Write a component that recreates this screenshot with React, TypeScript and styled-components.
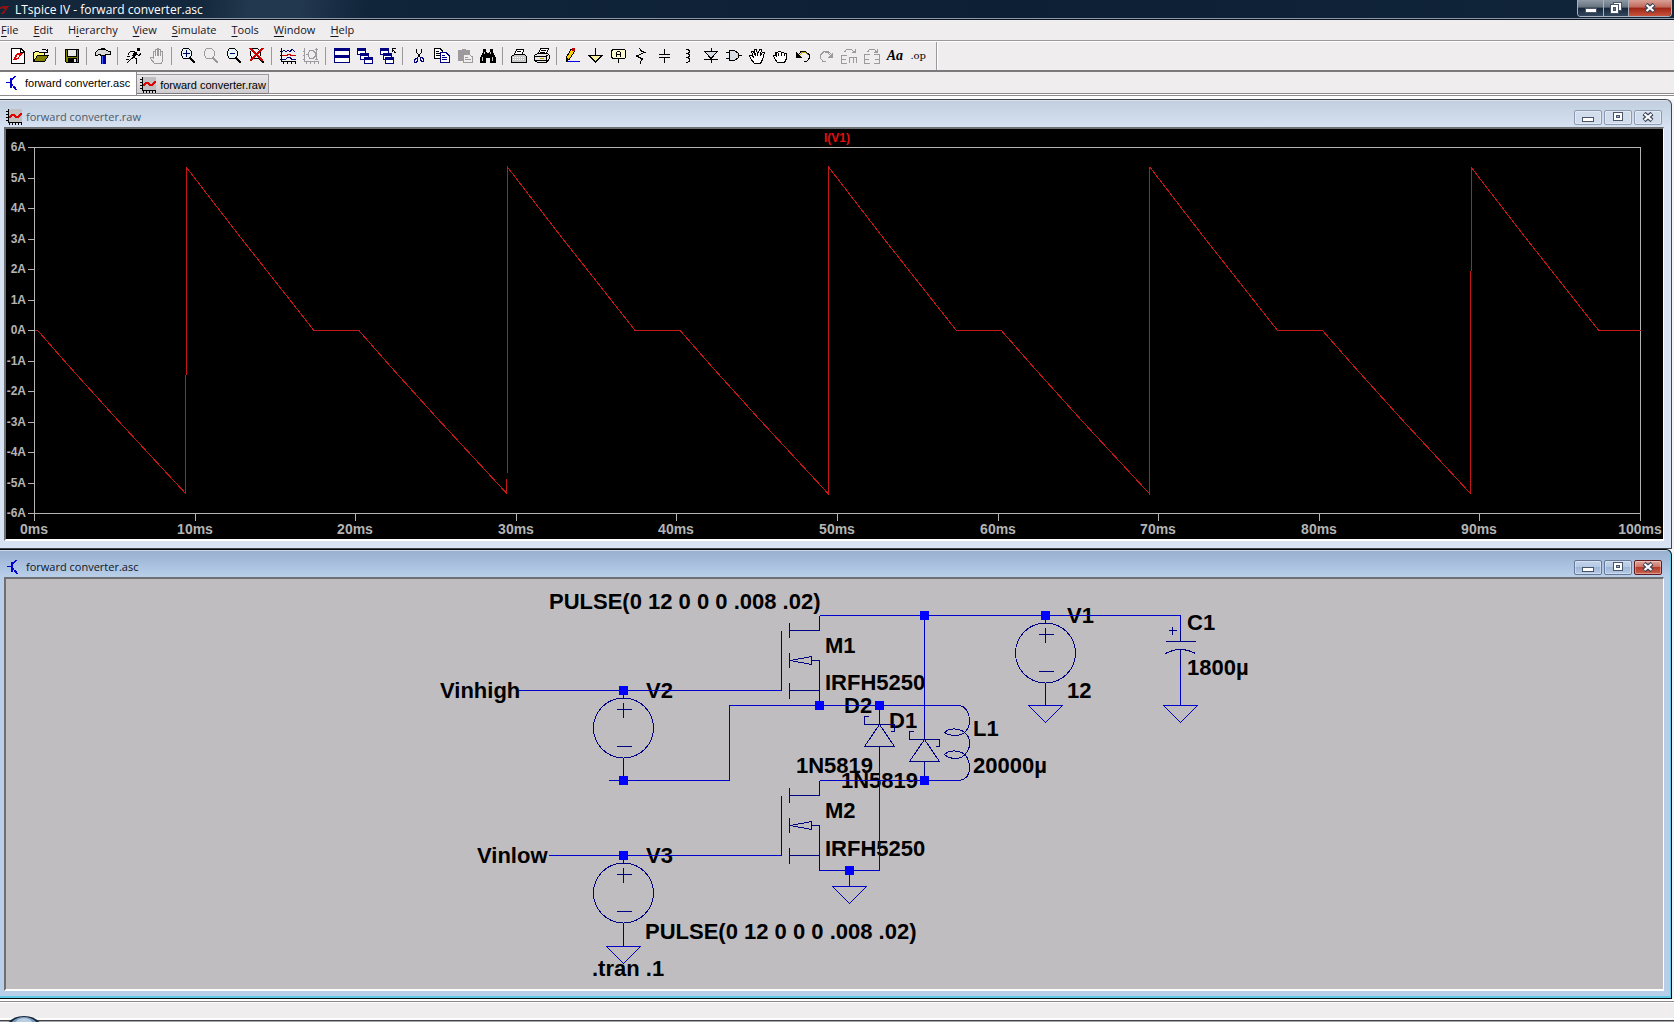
import React from "react";
import styled, { createGlobalStyle, css } from "styled-components";

const UI = `"Open Sans", "Noto Sans", sans-serif`;
const ARIAL = `"Liberation Sans", Arial, sans-serif`;

const GlobalStyle = createGlobalStyle`
  *, *::before, *::after { box-sizing: border-box; }
  body { margin: 0; background: #f0edef; font-family: ${UI}; font-size: 11px; }
  button { margin: 0; padding: 0; border: 0; background: none; font: inherit; color: inherit; }
`;

/* ---------- frame of the application ---------- */

const Shell = styled.div`
  display: flex;
  flex-direction: column;
  min-height: 100vh;
`;

const TitleBar = styled.header`
  display: flex;
  align-items: flex-start;
  justify-content: space-between;
  height: 20px;
  padding-right: 2px;
  color: #fff;
  background: linear-gradient(100deg, #132539 0%, #14283d 12%, #22384e 15%, #22384e 18%, #10243a 22%, #0c1f35 60%, #10243a 100%);
  border-bottom: 1px solid #0a1220;
  box-shadow: inset 0 -1px 0 #8d99a6;
`;

const AppName = styled.h1`
  display: flex;
  align-items: center;
  gap: 6px;
  margin: 0;
  height: 19px;
  font-size: 12px;
  line-height: 19px;
  font-weight: 400;
`;

const AppControls = styled.div`
  display: flex;
  height: 17px;
  border: 1px solid #a9b2bc;
  border-top: 0;
  border-radius: 0 0 4px 4px;
  overflow: hidden;
`;

const AppControl = styled.button<{ $close?: boolean }>`
  display: grid;
  place-items: center;
  width: ${(p) => (p.$close ? 43 : 25)}px;
  background: ${(p) =>
    p.$close
      ? "linear-gradient(#d9a196 0, #c0685a 45%, #9c2413 50%, #c8543c 100%)"
      : "linear-gradient(#8f9aa6 0, #66727f 45%, #15263a 50%, #33475c 100%)"};
  & + & { border-left: 1px solid #a9b2bc; }
`;

const MenuBar = styled.nav`
  display: flex;
  gap: 15px;
  height: 22px;
  padding: 0 1px;
  background: #f0edef;
  border-bottom: 1px solid #fff;
  box-shadow: inset 0 -1px 0 #9b999b;
`;

const MenuItem = styled.button`
  color: #14141e;
  line-height: 20px;
  height: 20px;
  u { text-underline-offset: 2px; }
`;

const ToolBar = styled.div`
  display: flex;
  align-items: stretch;
  height: 30px;
  padding-left: 6px;
  background: #f0edef;
  border-bottom: 2px solid #7b797b;
`;

const ToolGroup = styled.div`
  display: flex;
  align-items: center;
`;

const Separator = styled.span`
  align-self: center;
  width: 8px;
  height: 18px;
  background: linear-gradient(90deg, transparent 3px, #9b999b 3px, #9b999b 4px, transparent 4px);
`;

const ToolButton = styled.button`
  display: flex;
  align-items: center;
  justify-content: flex-end;
  padding-right: 3px;
  width: 23px;
  height: 28px;
`;

const ToolBarEnd = styled.span`
  margin-left: 7px;
  border-left: 1px solid #9b999b;
  box-shadow: inset 1px 0 0 #fff;
  width: 2px;
`;

const ToolWord = styled.span<{ $op?: boolean }>`
  line-height: 16px;
  color: #000;
  ${(p) =>
    p.$op
      ? css`
          font-family: "DejaVu Serif", serif;
          font-size: 10px;
        `
      : css`
          font-family: "Liberation Serif", "Times New Roman", serif;
          font-size: 14px;
          font-weight: 700;
          font-style: italic;
        `}
`;

const TabStrip = styled.div`
  display: flex;
  align-items: flex-start;
  height: 27px;
  padding-right: 4px;
  background: linear-gradient(#f0edef 21px, #8d8b8d 21px, #8d8b8d 22px, #fff 22px, #fff 23px, #8d8b8d 23px, #8d8b8d 24px, #fff 24px);
`;

const Tab = styled.button<{ $active?: boolean }>`
  display: flex;
  align-items: center;
  gap: 4px;
  font-family: ${ARIAL};
  font-size: 11px;
  color: #000;
  ${(p) =>
    p.$active
      ? css`
          height: 23px;
          padding: 0 6px 1px 5px;
          background: #fff;
          border-right: 1px solid #8d8b8d;
        `
      : css`
          height: 20px;
          margin-top: 2px;
          padding: 1px 2px 0 3px;
          background: linear-gradient(#e8e6e8, #cfcdcf);
          border: 1px solid #9b999b;
          border-left: 0;
          border-bottom-color: #7b797b;
        `}
`;

/* ---------- child windows ---------- */

const Desktop = styled.main`
  display: flex;
  flex-direction: column;
  padding-right: 2px;
  background: #f5f3f5;
`;

const Pane = styled.section<{ $active?: boolean }>`
  display: flex;
  flex-direction: column;
  border: 1px solid ${(p) => (p.$active ? "#05080c" : "#3f4650")};
  border-left: 0;
  border-radius: 0 6px 0 0;
  padding: 0 7px 7px 4px;
  background: ${(p) =>
    p.$active
      ? "linear-gradient(#fff 0, #98b1cf 1px, #adc4e2 18px, #b9cfe9 27px, #b9cfe9 100%)"
      : "linear-gradient(#eef3fa 0, #c3cfdf 1px, #cbd8e8 14px, #d7e2f2 27px, #d7e2f2 100%)"};
  ${(p) => p.$active && css`box-shadow: inset 0 -2px 0 #5fcbe6, inset -1px 0 0 #5fcbe6;`}
`;

const PaneHeader = styled.header`
  display: flex;
  align-items: center;
  height: 27px;
  padding: 7px 2px 0 2px;
`;

const PaneTitle = styled.h2<{ $active?: boolean }>`
  flex: 1;
  margin: 0 0 0 4px;
  font-size: 11px;
  line-height: 16px;
  font-weight: 400;
  color: ${(p) => (p.$active ? "#10151c" : "#4e5866")};
`;

const PaneControls = styled.div`
  display: flex;
  gap: 2px;
`;

const PaneControl = styled.button<{ $close?: boolean; $active?: boolean }>`
  display: grid;
  place-items: center;
  width: 28px;
  height: 15px;
  border-radius: 2px;
  border: 1px solid ${(p) => (p.$close ? "#5e1a1c" : p.$active ? "#66799a" : "#8d9bb4")};
  background: ${(p) =>
    p.$close
      ? "linear-gradient(#e0a69c 0, #cf7468 45%, #b53a28 50%, #cb6450 100%)"
      : p.$active
      ? "linear-gradient(#c3d4ea 0, #b4c9e4 45%, #9fb8d8 50%, #b5cae6 100%)"
      : "linear-gradient(#d3deec, #d0dcec)"};
  box-shadow: inset 0 0 0 1px rgba(255, 255, 255, 0.35);
`;

const Client = styled.div<{ $fill: string }>`
  border: solid;
  border-width: 2px 1px 2px 2px;
  border-color: #6e6f73 #fff #fff #6e6f73;
  background: ${(p) => p.$fill};
`;

const Canvas = styled.svg`
  display: block;
  width: 100%;
  height: auto;
  shape-rendering: crispEdges;
  font-family: ${ARIAL};
  font-weight: 700;
`;

const StatusBar = styled.footer`
  height: 20px;
  background: #f0edef;
  border-bottom: 1px solid #fff;
  box-shadow: inset 0 2px 0 #fff, inset 0 3px 0 #8d878b, inset 0 4px 0 #fff;
`;

const TaskBar = styled.div`
  position: relative;
  height: 3px;
  background: linear-gradient(#f8f8f8 1px, #45454b 1px, #45454b 2px, #a2a3a6 2px);
`;

const Orb = styled.svg`
  position: absolute;
  left: 6px;
  bottom: 0;
  display: block;
`;

/* ---------- icons ---------- */

const Glyph = styled.svg`
  display: block;
  flex: none;
  shape-rendering: crispEdges;
  fill: none;
  stroke-width: 1px;
`;

const SmoothGlyph = styled(Glyph)`
  shape-rendering: auto;
`;

const Icon = ({ children }: { children: React.ReactNode }) => (
  <Glyph width="16" height="16" viewBox="0 0 16 16" aria-hidden="true">
    {children}
  </Glyph>
);

const K = "#000";
const N = "#000080";
const G = "#9c9a9c";

const PlotIcon = () => (
  <Icon>
    <rect x="2" y="0" width="14" height="13" fill="#c0c0c0" />
    <path d="M2.5 0V13.5H16M0 2.5H2M0 5.5H2M0 8.5H2M0 11.5H2M3.5 14V16M6.5 14V16M9.5 14V16M12.5 14V16M15.5 14V16" stroke={K} />
    <path d="M3 8H4L6 6H8L10 8H12L15.500 4" stroke="#e00000" strokeWidth="2" />
  </Icon>
);

const TransistorIcon = () => (
  <Icon>
    <path d="M1 7.5H6M10.5 1L6.5 5M6.5 9L11 14.5" stroke="#0000d0" />
    <path d="M6 2.5V12.5" stroke="#0000d0" strokeWidth="2" />
    <path d="M8 13L10 10.5L12 15.5Z" fill="#0000d0" />
  </Icon>
);

const lens = (color: string, fill: string) => (
  <>
    <path d="M3.500 0.500H8.500L11.500 3.500V7.500L8.500 10.500H3.500L1.500 7.500V3.500Z" stroke={color} fill={fill} />
    <path d="M10 10L15 15" stroke={color} strokeWidth="2.4" />
  </>
);

const icons: Record<string, React.ReactNode> = {
  "New Schematic": (
    <Icon>
      <path d="M1.500 0.500H11L14.500 4V15.500H1.500Z" fill="#fff" stroke={K} />
      <path d="M10.500 0.500V4.500H14.500" stroke={K} />
      <path d="M3 12L6 6H8L6 10H8L7 12ZM7 5H13L12 7H11L8 12L9 7H7Z" fill="#e00000" />
    </Icon>
  ),
  Open: (
    <Icon>
      <path d="M0.500 13.500V4.500H1.500L2.500 3.500H5.500L6.500 4.500H11.500V7.500" fill="#ffff80" stroke={K} />
      <path d="M0.500 13.500L4.500 7.500H15.500L11.500 13.500Z" fill="#808000" stroke={K} />
      <path d="M9 1.500H12.500L14.500 3.500M14.500 1V4.500H11" stroke={K} />
    </Icon>
  ),
  Save: (
    <Icon>
      <path d="M1.500 1.500H14.500V14.500H2.500L1.500 13.500Z" fill="#808000" stroke={K} />
      <rect x="4" y="2" width="8" height="6" fill="#e8e8e8" />
      <path d="M3.500 2V8.500H12.500V2" stroke={K} />
      <rect x="4" y="10" width="9" height="5" fill={K} />
      <rect x="10" y="11" width="2" height="3" fill="#e8e8e8" />
    </Icon>
  ),
  "Control Panel": (
    <Icon>
      <path d="M0.500 7.500V4.500L3.500 1.500H10.500L13.500 3.500H15.500V6.500H10.500V7.500H5.500V6.500H3.500L2.500 7.500Z" fill="#d8d8d8" stroke={K} />
      <rect x="6" y="0" width="4" height="2" fill={K} />
      <rect x="6" y="8" width="5" height="8" fill="#0000a0" />
      <rect x="7" y="8" width="1" height="8" fill="#4060ff" />
    </Icon>
  ),
  Run: (
    <Icon>
      <rect x="11" y="0" width="3" height="3" fill={K} />
      <path d="M4 3.500H8L11 5L8 9L5 11L1 15M8 9L10.500 11V15.500M10 6L13 7.500L15 5.500M4.500 3L2 6.500M1 8.500H4M0 11.500H3" stroke={K} />
      <path d="M8 4L11 5L8 9L6 8Z" fill={K} />
    </Icon>
  ),
  Halt: (
    <Icon>
      <path d="M5.500 15.500L1.500 10.500V9.500H3.500L4.500 10.500V3.500H6.500V8V1.500H8.500V8V0.500H9.500V8V1.500H11.500V8V3.500H13.500V12.500L12.500 15.500Z" stroke={G} />
    </Icon>
  ),
  "Zoom In": (
    <Icon>
      {lens(K, "#e4f6f8")}
      <path d="M3 5.500H10M6.500 2V9" stroke="#000060" strokeWidth="1.500" />
    </Icon>
  ),
  "Zoom Area": <Icon>{lens(G, "none")}</Icon>,
  "Zoom Back": (
    <Icon>
      {lens(K, "#e4f6f8")}
      <path d="M4 5.500H9" stroke="#000060" strokeWidth="1.500" />
    </Icon>
  ),
  "Zoom Full Extents": (
    <Icon>
      {lens(K, "#e4f6f8")}
      <path d="M1 0L14 13M14 0L1 13" stroke="#d00000" strokeWidth="1.800" />
    </Icon>
  ),
  "Pick Visible Traces": (
    <Icon>
      <path d="M1.500 0V13.500H16M0 3.500H1M0 7.500H1M0 11.500H1M3.500 14V16M7.500 14V16M11.500 14V16M15.500 14V16" stroke={K} />
      <path d="M2 4L4 2L6 4L8 2L10 4L12 1L15 4" stroke={N} />
      <path d="M2 7.500H6L9 6.500L12 7.500H16" stroke="#d00000" />
      <path d="M2 11.500H5L8 9.500H10L12 11.500H16" stroke={N} />
    </Icon>
  ),
  "Autorange Y-axis": (
    <Icon>
      <path d="M1.500 0V13.500H16M0 3.500H1M0 7.500H1M0 11.500H1M3.500 14V16M7.500 14V16M11.500 14V16M15.500 14V16M7 2.500H10L12.500 5V8L10 10.500H7M7 2.500L5 5V8L7 10.500M3 6.500H6M13.500 0V12M12 1.500H15M12 11.500H15" stroke={G} />
    </Icon>
  ),
  "Tile Windows": (
    <Icon>
      <rect x="0.500" y="0.500" width="15" height="7" fill="#fff" stroke={N} />
      <rect x="0.500" y="7.500" width="15" height="7" fill="#fff" stroke={N} />
      <path d="M0 2H16M0 9H16" stroke={N} strokeWidth="2" />
    </Icon>
  ),
  Cascade: (
    <Icon>
      {[[0, 0], [3, 5], [7, 9]].map(([x, y]) => (
        <g key={x}>
          <rect x={x + 0.5} y={y + 0.5} width="8" height="6" fill="#fff" stroke={N} />
          <rect x={x} y={y} width="9" height="3" fill={N} />
        </g>
      ))}
    </Icon>
  ),
  "Close All": (
    <Icon>
      {[[0, 0], [3, 5], [5, 9]].map(([x, y]) => (
        <g key={x}>
          <rect x={x + 0.5} y={y + 0.5} width="8" height="6" fill="#fff" stroke={N} />
          <rect x={x} y={y} width="9" height="3" fill={N} />
        </g>
      ))}
      <path d="M15.500 5L12.500 1.500M12 4V0.500H16" stroke={K} />
    </Icon>
  ),
  Cut: (
    <Icon>
      <path d="M5.500 1V4L9.500 10M10.500 1V4L6.500 10" stroke={K} />
      <path d="M4.500 10.500H6.500V12.500L5.500 14.500H3.500V12.500ZM9.500 9.500H11.500L12.500 11.500V13.500H10.500L9.500 11.500Z" stroke={N} />
    </Icon>
  ),
  Copy: (
    <Icon>
      <path d="M0.500 0.500H6L8.500 3V10.500H0.500Z" fill="#fff" stroke={K} />
      <path d="M2 3.500H5M2 5.500H6M2 7.500H6" stroke={K} />
      <path d="M6.500 4.500H12L15.500 8V14.500H6.500Z" fill="#fff" stroke={N} />
      <path d="M8 7.500H11M8 9.500H13M8 11.500H13" stroke={N} />
    </Icon>
  ),
  Paste: (
    <Icon>
      <path d="M1 2H5V1H9V2H13V13H1Z" fill={G} />
      <path d="M6.500 6.500H12L15.500 9V14.500H6.500Z" fill="#f0edef" stroke={G} />
      <path d="M8 9.500H11M8 11.500H14" stroke={G} />
    </Icon>
  ),
  Find: (
    <Icon>
      <path d="M3 1H6V4H7V5H9V4H10V1H13V4L16 10V15H10V10H6V15H0V10L3 4Z" fill={K} />
      <path d="M4.500 4V6M2.500 9V13M10.500 4V6M12.500 9V13" stroke="#c8c8c8" />
    </Icon>
  ),
  "Print Setup": (
    <Icon>
      <path d="M3.500 6.500L5.500 1.500H12.500L11.500 6.500" fill="#fff" stroke={K} />
      <path d="M0.500 14.500V8.500L3.500 6.500H13.500L15.500 8.500V14.500Z" fill="#c8c8c8" stroke={K} />
      <path d="M2 9.500H14M2 11.500H14" stroke="#fff" strokeDasharray="1 1" />
      <path d="M6 3.500H10" stroke={K} />
    </Icon>
  ),
  Print: (
    <Icon>
      <path d="M4.500 5.500L6.500 0.500H14.500L12.500 5.500" fill="#fff" stroke={K} />
      <path d="M7 2.500H12M6 4.500H11" stroke={K} />
      <path d="M0.500 12.500V7.500L3.500 5.500H13.500L15.500 7.500V10.500L12.500 14.500H3.500Z" fill="#e8e8e8" stroke={K} />
      <path d="M1 8.500H12L15 6M1 12.500H12M12.500 9V14" stroke={K} />
      <rect x="6" y="10" width="4" height="1" fill="#c0b000" />
    </Icon>
  ),
  "Draw Wire": (
    <Icon>
      <path d="M1.500 12.500V9L6 1.500H9.500V3.500L4.500 11Z" fill="#ffd000" stroke={K} />
      <rect x="7" y="0" width="3" height="3" fill="#c00000" />
      <rect x="1" y="10" width="2" height="4" fill={K} />
      <path d="M2 13.500H15" stroke="#0000e0" />
    </Icon>
  ),
  Ground: (
    <Icon>
      <path d="M1 7.500H15L8.500 13.500Z" fill="#f4f0a0" />
      <path d="M0 7.500H15M7.500 0V7M1.500 8L7.500 14L13.500 8" stroke={K} />
    </Icon>
  ),
  "Label Net": (
    <Icon>
      <path d="M2.500 1.500H13.500L14.500 2.500V9.500L13.500 10.500H2.500L0.500 9.500V2.500Z" fill="#fbf8cc" stroke={K} />
      <path d="M5.500 9V4.500L6.500 3.500H8.500L9.500 4.500V9M5 6.500H10M7.500 11V15" stroke={K} />
    </Icon>
  ),
  Resistor: (
    <Icon>
      <path d="M5.500 0L6.500 2.500L10.500 4.500L2.500 8L8.500 11L6.500 13.500V16" stroke={K} />
    </Icon>
  ),
  Capacitor: (
    <Icon>
      <path d="M7.500 1V6M7.500 10V15" stroke={K} />
      <path d="M2 6.500H13M2 9.500H13" stroke={K} />
    </Icon>
  ),
  Inductor: (
    <Icon>
      <path d="M5.500 1.500H7.500L9.500 2.500V4.500L7.500 5.500H6M7.500 5.500L9.500 6.500V8.500L7.500 9.500H6M7.500 9.500L9.500 10.500V13L7.500 14.500H5.500" stroke={K} />
    </Icon>
  ),
  Diode: (
    <Icon>
      <path d="M1.500 3.500H14.500L8 10.500Z" fill="#d8dce4" stroke={K} />
      <path d="M8.500 0V3M8.500 11V15M1 11.500H15" stroke={K} />
    </Icon>
  ),
  Component: (
    <Icon>
      <path d="M3.500 2.500H8.500L12.500 5.500V9.500L8.500 12.500H3.500Z" fill="#d8dce4" stroke={K} />
      <path d="M0 4.500H3M0 10.500H3M13 7.500H16" stroke={K} />
    </Icon>
  ),
  Move: (
    <Icon>
      <path d="M5.500 15.500L1.500 10.500L0.500 7.500H2.500L4.500 9.500L2.500 3.500H4.500L6.500 7.500L5.500 1.500H7.500L8.500 6.500L10.500 1.500H12.500L11.500 7.500L13.500 4.500H15.500L13.500 11.500L11.500 15.500Z" fill="#fff" stroke={K} />
    </Icon>
  ),
  Drag: (
    <Icon>
      <path d="M5.500 14.500L2.500 10.500L1.500 7.500H3.500V4.500H5.500L6.500 3.500H8.500L9.500 4.500H11.500L12.500 5.500H14.500V10.500L12.500 14.500Z" fill="#fff" stroke={K} />
      <path d="M4.500 5V9M6.500 5V8M9.500 5V8M12.500 6V8" stroke={K} />
    </Icon>
  ),
  Undo: (
    <Icon>
      <path d="M4 6L6 3.500H10.500L14.500 7V10L11.500 13.500H9" stroke={K} />
      <path d="M5 7L7 4.500H10.500L13.500 7.500" stroke="#c0a800" />
      <path d="M1 4V10H7Z" fill={K} />
    </Icon>
  ),
  Redo: (
    <Icon>
      <path d="M13 6L10 3.500H6L2.500 7V10L5 13.500H8" stroke={G} />
      <path d="M12 7L10 4.500H7" stroke={G} />
      <path d="M15 4V10H9Z" fill={G} />
    </Icon>
  ),
  Rotate: (
    <Icon>
      <path d="M5.500 7.500H0.500V15.500H5.500M1 11.500H5M8.500 15V9.500H15.500V15M12.500 10V15" stroke={G} strokeWidth="1.500" />
      <path d="M3.500 4L5.500 1.500H10.500L13.500 4M14.500 0.500V4.500H10.500" stroke={G} />
    </Icon>
  ),
  Mirror: (
    <Icon>
      <path d="M5.500 6.500H0.500V15.500H5.500M1 11.500H5M10 6.500H15.500V15.500H10M11 11.500H15" stroke={G} strokeWidth="1.500" />
      <path d="M3.500 4L5.500 1.500H10.500L12.500 4M13.500 0.500V4.500H9.500" stroke={G} />
    </Icon>
  ),
  Text: <ToolWord>Aa</ToolWord>,
  "SPICE Directive": <ToolWord $op>.op</ToolWord>,
};

const toolGroups = [
  ["New Schematic", "Open"],
  ["Save"],
  ["Control Panel"],
  ["Run", "Halt"],
  ["Zoom In", "Zoom Area", "Zoom Back", "Zoom Full Extents"],
  ["Pick Visible Traces", "Autorange Y-axis"],
  ["Tile Windows", "Cascade", "Close All"],
  ["Cut", "Copy", "Paste", "Find"],
  ["Print Setup", "Print"],
  ["Draw Wire", "Ground", "Label Net", "Resistor", "Capacitor", "Inductor", "Diode", "Component", "Move", "Drag", "Undo", "Redo", "Rotate", "Mirror", "Text", "SPICE Directive"],
];

const menus: [string, string, string][] = [
  ["", "F", "ile"],
  ["", "E", "dit"],
  ["H", "i", "erarchy"],
  ["", "V", "iew"],
  ["", "S", "imulate"],
  ["", "T", "ools"],
  ["", "W", "indow"],
  ["", "H", "elp"],
];

const MinMark = () => (
  <Glyph width="12" height="10" viewBox="0 0 12 10">
    <rect x="0.500" y="5.500" width="11" height="4" fill="#fff" stroke="#4a5468" />
  </Glyph>
);
const MaxMark = () => (
  <Glyph width="12" height="10" viewBox="0 0 12 10">
    <rect x="1.500" y="0.500" width="9" height="8" fill="#fff" stroke="#4a5468" />
    <rect x="4.500" y="3.500" width="3" height="2" fill="#9fb3d0" stroke="#4a5468" />
  </Glyph>
);
const RestoreMark = () => (
  <Glyph width="12" height="12" viewBox="0 0 12 12">
    <rect x="3.500" y="0.500" width="8" height="8" fill="#fff" stroke="#4a5468" />
    <rect x="0.500" y="2.500" width="8" height="9" fill="#fff" stroke="#4a5468" />
    <rect x="3.500" y="5.500" width="2" height="3" fill="#66727f" stroke="#4a5468" />
  </Glyph>
);
const CloseMark = () => (
  <SmoothGlyph width="12" height="10" viewBox="0 0 12 10">
    <path d="M2 1.500L10 8.500M10 1.500L2 8.500" stroke="#3e4458" strokeWidth="4.500" />
    <path d="M2.500 2L9.500 8M9.500 2L2.500 8" stroke="#fff" strokeWidth="2.200" />
  </SmoothGlyph>
);

/* ---------- waveform ---------- */

const X0 = 34;
const X1 = 1640;
const Y0 = 147;
const Y1 = 513;
const perMs = (X1 - X0) / 100;
const perAmp = (Y1 - Y0) / 12;
const px = (ms: number) => X0 + ms * perMs;
const py = (amp: number) => Y0 + (6 - amp) * perAmp;

const trace: [number, number][] = [[0, 0]];
for (let s = 0.2; s < 100; s += 20) {
  trace.push([s, 0], [s + 2, -1.2], [s + 5, -2.95], [s + 9.22, -5.35], [s + 9.26, 5.35]);
  trace.push([s + 12.6, 3.07], [s + 15, 1.47], [s + 17.2, 0], [Math.min(s + 20, 100), 0]);
}

const Waveform = () => (
  <Canvas viewBox="6 129 1657 410" role="img" aria-label="I(V1) over time">
    <g transform="translate(0.5 0.5)" fill="none" stroke="#b4b4b4">
      <rect x={X0} y={Y0} width={X1 - X0} height={Y1 - Y0} />
      {Array.from({ length: 13 }, (_, i) => (
        <path key={i} d={`M${X0 - 7} ${Math.round(py(6 - i))}H${X0}`} />
      ))}
      {Array.from({ length: 11 }, (_, i) => (
        <path key={i} d={`M${Math.round(px(i * 10))} ${Y1}V${Y1 + 7}`} />
      ))}
      <polyline points={trace.map(([t, a]) => `${px(t)},${py(a)}`).join(" ")} stroke="#c41818" />
    </g>
    <g fill="#b4b4b4">
      {Array.from({ length: 13 }, (_, i) => (
        <text key={i} x="26" y={Math.round(py(6 - i)) + 4} fontSize="12" textAnchor="end">
          {6 - i}A
        </text>
      ))}
      {Array.from({ length: 11 }, (_, i) => (
        <text key={i} x={Math.round(px(i * 10))} y="534" fontSize="14" textAnchor="middle">
          {i * 10}ms
        </text>
      ))}
    </g>
    <text x="837" y="142" fontSize="12" textAnchor="middle" fill="#e01010">
      I(V1)
    </text>
  </Canvas>
);

/* ---------- schematic ---------- */

const WIRE = "#0000cc";
const PART = "#000082";

const Source = ({ x, y, ground }: { x: number; y: number; ground?: boolean }) => (
  <g stroke={PART}>
    <path d={`M${x} ${y}v8M${x} ${y + 67}v${ground ? 24 : 23}M${x - 7} ${y + 19}h15M${x} ${y + 12}v15M${x - 7} ${y + 56}h15`} />
    <circle cx={x} cy={y + 37.5} r="30" />
  </g>
);

const Mosfet = ({ x, y }: { x: number; y: number }) => (
  <path
    stroke={PART}
    d={`M${x} ${y}v-60M${x + 8} ${y - 68}v15M${x + 8} ${y - 38}v15M${x + 8} ${y - 8}v16M${x + 8} ${y - 60}h30v-15M${x + 8} ${y}h30M${x + 38} ${y + 15}v-45h-8M${x + 9} ${y - 30}l21 -4v8z`}
  />
);

const Diode = ({ x, y }: { x: number; y: number }) => (
  <path stroke={PART} d={`M${x} ${y - 19}v19M${x - 11} ${y - 8}h-4v8h30v7h-4M${x} ${y}l-15 22h30zM${x} ${y + 22}v19`} />
);

const Ground = ({ x, y }: { x: number; y: number }) => <path stroke={WIRE} d={`M${x - 17} ${y}h34l-17 17z`} />;

const nodes = [[623, 690], [623, 780], [819, 705], [879, 705], [924, 615], [1045, 615], [924, 780], [623, 855], [849, 870]];

const labels: [number, number, string][] = [
  [549, 609, "PULSE(0 12 0 0 0 .008 .02)"],
  [440, 698, "Vinhigh"],
  [646, 698, "V2"],
  [477, 863, "Vinlow"],
  [646, 863, "V3"],
  [645, 939, "PULSE(0 12 0 0 0 .008 .02)"],
  [592, 976, ".tran .1"],
  [825, 653, "M1"],
  [825, 690, "IRFH5250"],
  [844, 713, "D2"],
  [889, 728, "D1"],
  [796, 773, "1N5819"],
  [841, 788, "1N5819"],
  [825, 818, "M2"],
  [825, 856, "IRFH5250"],
  [973, 736, "L1"],
  [973, 773, "20000µ"],
  [1067, 623, "V1"],
  [1067, 698, "12"],
  [1187, 630, "C1"],
  [1187, 675, "1800µ"],
];

const Schematic = () => (
  <Canvas viewBox="6 579 1657 410" role="img" aria-label="Forward converter schematic">
    <g fill="#000" fontSize="22">
      {labels.map(([x, y, t]) => (
        <text key={`${x}-${y}`} x={x} y={y}>
          {t}
        </text>
      ))}
    </g>
    <g transform="translate(0.5 0.5)" fill="none">
      <path
        stroke={WIRE}
        d="M518 690H781M608 780H729V705H959M819 615H1180V630M924 615V720M819 780H959M879 765V870H819M548 855H781M849 870V886M1180 665V705M1045 690V705"
      />
      <Source x={623} y={690} />
      <Source x={623} y={855} ground />
      <Source x={1045} y={615} />
      <Mosfet x={781} y={690} />
      <Mosfet x={781} y={855} />
      <Diode x={879} y={724} />
      <Diode x={924} y={739} />
      <path stroke={PART} d="M1180 630V641M1165 641H1195M1165 653Q1180 645 1195 653M1180 649V665M1168 630H1176M1172 626V634" />
      <path
        stroke={PART}
        d="M959 705C966 706 969 714 969 720C969 726 967 731 961 734C955 736 948 735 944 732C948 728 957 727 963 731C968 735 969 738 969 743C969 749 967 753 961 757C955 759 948 758 944 754C948 750 957 749 963 753C968 757 969 762 969 767C969 774 966 779 959 780"
      />
      <Ground x={623} y={946} />
      <Ground x={849} y={886} />
      <Ground x={1045} y={705} />
      <Ground x={1180} y={705} />
    </g>
    <g fill="#0000ff">
      {nodes.map(([x, y]) => (
        <rect key={`${x}-${y}`} x={x - 4} y={y - 4} width="9" height="9" />
      ))}
    </g>
  </Canvas>
);

/* ---------- page ---------- */

const ChildWindow = (props: { title: string; icon: React.ReactNode; fill: string; active?: boolean; children: React.ReactNode }) => (
  <Pane $active={props.active}>
    <PaneHeader>
      {props.icon}
      <PaneTitle $active={props.active}>{props.title}</PaneTitle>
      <PaneControls>
        <PaneControl $active={props.active} aria-label="Minimize"><MinMark /></PaneControl>
        <PaneControl $active={props.active} aria-label="Maximize"><MaxMark /></PaneControl>
        <PaneControl $active={props.active} $close={props.active} aria-label="Close"><CloseMark /></PaneControl>
      </PaneControls>
    </PaneHeader>
    <Client $fill={props.fill}>{props.children}</Client>
  </Pane>
);

export default function App() {
  return (
    <Shell>
      <GlobalStyle />
      <TitleBar>
        <AppName>
          <Glyph width="9" height="16" viewBox="0 0 9 16" aria-hidden="true">
            <path d="M2 4H9L7 7L4 12H1L5 7H3ZM0 5H2V7H0Z" fill="#8a1414" />
          </Glyph>
          LTspice IV - forward converter.asc
        </AppName>
        <AppControls>
          <AppControl aria-label="Minimize application"><MinMark /></AppControl>
          <AppControl aria-label="Restore application"><RestoreMark /></AppControl>
          <AppControl $close aria-label="Close application"><CloseMark /></AppControl>
        </AppControls>
      </TitleBar>
      <MenuBar>
        {menus.map(([a, b, c]) => (
          <MenuItem key={b + c}>
            {a}<u>{b}</u>{c}
          </MenuItem>
        ))}
      </MenuBar>
      <ToolBar>
        {toolGroups.map((group, i) => (
          <ToolGroup key={group[0]}>
            {i > 0 && <Separator />}
            {group.map((name) => (
              <ToolButton key={name} aria-label={name}>{icons[name]}</ToolButton>
            ))}
          </ToolGroup>
        ))}
        <ToolBarEnd />
      </ToolBar>
      <TabStrip>
        <Tab $active><TransistorIcon />forward converter.asc</Tab>
        <Tab><PlotIcon />forward converter.raw</Tab>
      </TabStrip>
      <Desktop>
        <ChildWindow title="forward converter.raw" icon={<PlotIcon />} fill="#000">
          <Waveform />
        </ChildWindow>
        <ChildWindow title="forward converter.asc" icon={<TransistorIcon />} fill="#c0bdc0" active>
          <Schematic />
        </ChildWindow>
      </Desktop>
      <StatusBar />
      <TaskBar>
        <Orb width="36" height="6" viewBox="0 0 36 6" aria-hidden="true">
          <ellipse cx="18" cy="11" rx="17" ry="11" fill="#16283c" />
          <ellipse cx="18" cy="11" rx="14" ry="10" fill="#7f9fbe" />
          <ellipse cx="18" cy="9" rx="9" ry="7" fill="#b8cfe2" />
        </Orb>
      </TaskBar>
    </Shell>
  );
}
